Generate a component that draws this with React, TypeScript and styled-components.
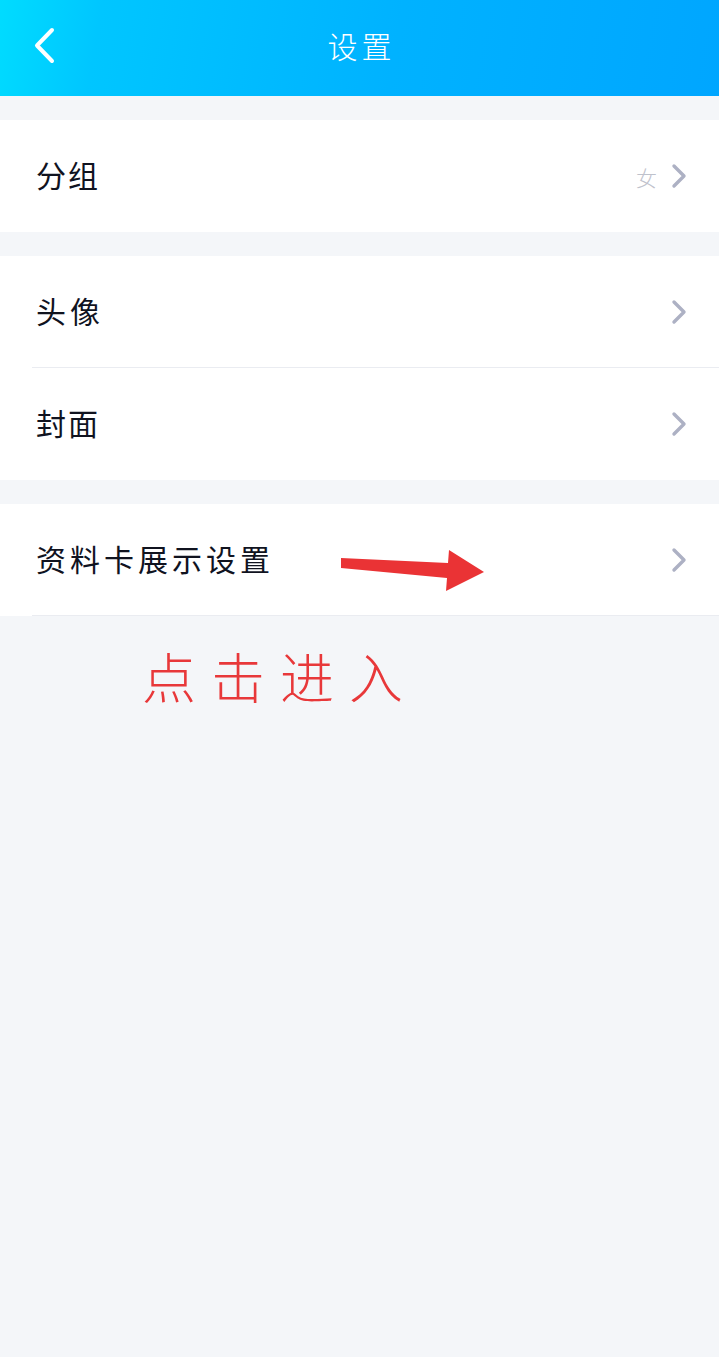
import React from 'react';
import styled, {createGlobalStyle} from "styled-components";

const GlobalStyle = createGlobalStyle`
  html, body {
    margin: 0;
    padding: 0;
    background: #f4f6f9;
  }
  body {
    font-family: "Noto Sans CJK SC", "Noto Sans", sans-serif;
  }
`

const Page = styled.div`
  position: relative;
  width: 719px;
  min-height: 1357px;
  background: #f4f6f9;
  overflow: hidden;
`

const Header = styled.header`
  position: relative;
  height: 96px;
  display: flex;
  align-items: center;
  justify-content: center;
  background: linear-gradient(100deg, #00dcff 0%, #00c6ff 14%, #00b2ff 55%, #00a6ff 100%);
  margin-bottom: 24px;
`

const BackButton = styled.svg`
  position: absolute;
  left: 32px;
  top: 26px;
  width: 24px;
  height: 38px;
`

const Title = styled.h1`
  margin: 0 0 7px 4px;
  color: #fff;
  font-size: 30px;
  font-weight: 300;
  letter-spacing: 4px;
  line-height: 1;
`

const Card = styled.section`
  background: #fff;
  margin-bottom: 24px;
`

const Row = styled.div<{$divider?: boolean}>`
  position: relative;
  height: 112px;
  box-sizing: border-box;
  padding: 0 32px 0 36px;
  display: flex;
  align-items: center;
  &::after {
    content: "";
    display: ${({$divider}) => $divider ? "block" : "none"};
    position: absolute;
    left: 32px;
    right: 0;
    bottom: 0;
    height: 1px;
    background: #eaecf1;
  }
`

const Label = styled.span<{$spacing?: number}>`
  flex: 1;
  margin-bottom: 4px;
  color: #10131f;
  font-size: 30px;
  font-weight: 400;
  line-height: 1;
  letter-spacing: ${({$spacing}) => $spacing ?? 2}px;
`

const Value = styled.span`
  color: #bfc2cc;
  font-size: 21px;
  font-weight: 300;
  margin: 2px 14px 0 0;
`

const Chevron = styled.svg`
  width: 16px;
  height: 26px;
`

const Arrow = styled.svg`
  position: absolute;
  left: 340px;
  top: 548px;
  width: 146px;
  height: 44px;
`

const Note = styled.div`
  position: absolute;
  left: 142px;
  top: 644px;
  color: #e8383a;
  font-size: 54px;
  font-weight: 300;
  line-height: 1.2;
  letter-spacing: 15px;
  white-space: nowrap;
`

const RowChevron = () => (
    <Chevron viewBox="0 0 16 26" fill="none">
        <path d="M3 3l10 10L3 23" stroke="#adb1c4" strokeWidth="3.4" strokeLinecap="round" strokeLinejoin="round"/>
    </Chevron>
);

const App = () => {
    return (
        <Page>
            <GlobalStyle/>
            <Header>
                <BackButton viewBox="0 0 24 38" fill="none">
                    <path d="M20 4L5 19.5 20 35" stroke="#fff" strokeWidth="4" strokeLinecap="round" strokeLinejoin="round"/>
                </BackButton>
                <Title>设置</Title>
            </Header>
            <Card>
                <Row>
                    <Label>分组</Label>
                    <Value>女</Value>
                    <RowChevron/>
                </Row>
            </Card>
            <Card>
                <Row $divider>
                    <Label $spacing={4}>头像</Label>
                    <RowChevron/>
                </Row>
                <Row>
                    <Label>封面</Label>
                    <RowChevron/>
                </Row>
            </Card>
            <Card>
                <Row $divider>
                    <Label $spacing={4}>资料卡展示设置</Label>
                    <RowChevron/>
                </Row>
            </Card>
            <Arrow viewBox="0 0 146 44">
                <path d="M1 10L108 15 109 2 144 24 106 43 107 30 1 20Z" fill="#ea3335"/>
            </Arrow>
            <Note>点击进入</Note>
        </Page>
    );
};

export default App;
